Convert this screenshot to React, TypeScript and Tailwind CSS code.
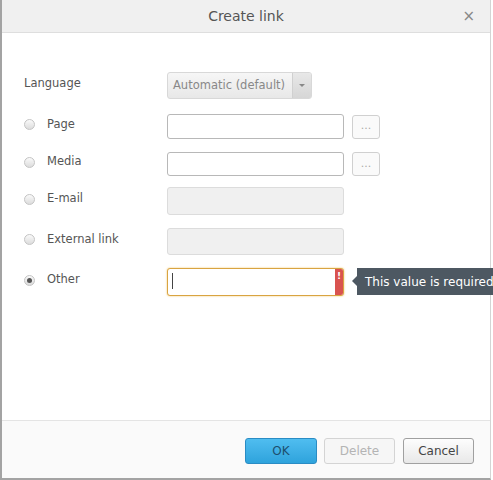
import { useState } from "react";

const font = { fontFamily: '"DejaVu Sans", Verdana, sans-serif' };

function Radio({ checked }: { checked?: boolean }) {
  return (
    <span className="flex h-[11px] w-[11px] items-center justify-center rounded-full border border-[#c4c4c4] bg-gradient-to-b from-[#fafafa] to-[#dcdcdc]">
      {checked && <span className="h-[5px] w-[5px] rounded-full bg-[#555]" />}
    </span>
  );
}

function Row({ label, checked, top, children }: { label: string; checked?: boolean; top: string; children: React.ReactNode }) {
  return (
    <div className={`flex items-center ${top}`}>
      <div className="relative -top-[2px] flex w-[143px] shrink-0 items-center pl-[22px]">
        <Radio checked={checked} />
        <span className="ml-[12px] text-[#555]">{label}</span>
      </div>
      {children}
    </div>
  );
}

export default function App() {
  const [other, setOther] = useState("");

  return (
    <div className="h-[480px] w-[493px] overflow-hidden bg-white text-[11.5px]" style={font}>
      <div className="flex h-[480px] w-[491px] flex-col border-b-2 border-l-2 border-r border-b-[#a3a3a3] border-l-[#a3a3a3] border-r-[#d4d4d4]">
        <div className="relative flex h-[33px] shrink-0 items-center justify-center border-b border-[#dedede] bg-[#f0f0f0]">
          <span className="text-[14px] text-[#555]">Create link</span>
          <span className="absolute right-[15px] top-[5px] text-[15px] text-[#888]">×</span>
        </div>

        <div className="flex-1">
          <div className="mt-[39px] flex items-center">
            <div className="relative -top-[2px] w-[165px] pl-[22px] text-[#555]">Language</div>
            <div className="flex h-[27px] w-[145px] overflow-hidden rounded-[3px] border border-[#d8d8d8] bg-gradient-to-b from-[#f6f6f6] to-[#e8e8e8]">
              <span className="flex flex-1 items-center pl-[5px] text-[#888]">Automatic (default)</span>
              <span className="flex w-[19px] items-center justify-center border-l border-[#d0d0d0] bg-gradient-to-b from-[#e8e8e8] to-[#d6d6d6]">
                <span className="h-0 w-0 border-x-[3px] border-t-[3px] border-x-transparent border-t-[#888]" />
              </span>
            </div>
          </div>

          <Row label="Page" top="mt-[15px]">
            <div className="ml-[22px] h-[25px] w-[177px] shrink-0 rounded-[3px] border border-[#b8b8b8] bg-white" />
            <button className="ml-[8px] flex h-[24px] w-[28px] items-center justify-center rounded-[3px] border border-[#d0d0d0] bg-[#fafafa] text-[11px] text-[#aaa]">...</button>
          </Row>

          <Row label="Media" top="mt-[13px]">
            <div className="ml-[22px] h-[24px] w-[177px] shrink-0 rounded-[3px] border border-[#b8b8b8] bg-white" />
            <button className="ml-[8px] flex h-[24px] w-[28px] items-center justify-center rounded-[3px] border border-[#d0d0d0] bg-[#fafafa] text-[11px] text-[#aaa]">...</button>
          </Row>

          <Row label="E-mail" top="mt-[11px]">
            <div className="ml-[22px] h-[28px] w-[177px] shrink-0 rounded-[3px] border border-[#dcdcdc] bg-[#f0f0f0]" />
          </Row>

          <Row label="External link" top="mt-[13px]">
            <div className="ml-[22px] h-[27px] w-[177px] shrink-0 rounded-[3px] border border-[#dcdcdc] bg-[#f0f0f0]" />
          </Row>

          <Row label="Other" checked top="mt-[13px]">
            <div className="relative ml-[22px] h-[28px] w-[177px] shrink-0">
              <div className="flex h-full w-full overflow-hidden rounded-[3px] border border-[#d9a441] bg-white shadow-[0_0_2px_#f0c060]">
                <input
                  value={other}
                  onChange={(e) => setOther(e.target.value)}
                  className="h-full min-w-0 flex-1 bg-transparent pl-[4px] text-[#333] outline-none"
                  style={font}
                />
                <span className="absolute left-[5px] top-[5px] h-[16px] w-[1px] bg-[#444]" />
                <span className="flex w-[8px] items-start justify-center bg-[#d9534f] pt-[1px] text-[9px] font-bold leading-[12px] text-white">!</span>
              </div>
              <div className="absolute left-[190px] top-0 flex h-[27px] w-[160px] items-center bg-[#4d5862] pl-[8px] text-[12px] whitespace-nowrap text-white">
                <span className="absolute left-[-5px] top-[8px] h-0 w-0 border-y-[5px] border-r-[5px] border-y-transparent border-r-[#4d5862]" />
                This value is required
              </div>
            </div>
          </Row>
        </div>

        <div className="flex h-[58px] shrink-0 items-start justify-end border-t border-[#e4e4e4] bg-[#fafafa] pr-[16px] pt-[17px]">
          <button className="h-[26px] w-[72px] rounded-[3px] border border-[#2a8cc4] bg-gradient-to-b from-[#4fbdf0] to-[#2ea3dc] text-[12px] text-[#1d4f6e]" style={font}>OK</button>
          <button className="ml-[7px] h-[26px] w-[71px] rounded-[3px] border border-[#d4d4d4] bg-[#f6f6f6] text-[12px] text-[#b4b4b4]" style={font}>Delete</button>
          <button className="ml-[8px] h-[26px] w-[71px] rounded-[3px] border border-[#a0a0a0] bg-gradient-to-b from-[#fdfdfd] to-[#e8e8e8] text-[12px] text-[#444]" style={font}>Cancel</button>
        </div>
      </div>
    </div>
  );
}
